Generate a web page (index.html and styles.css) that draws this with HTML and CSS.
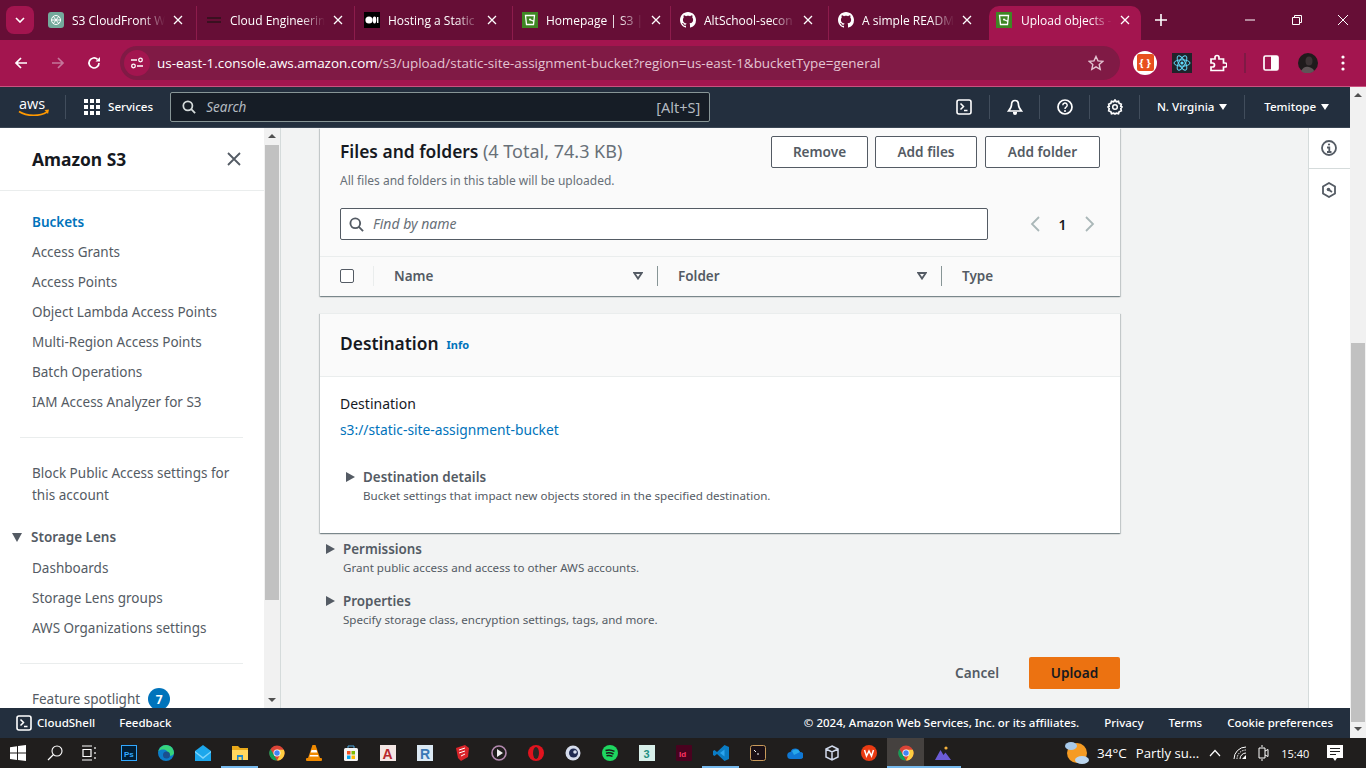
FILE: index.html
```html
<!DOCTYPE html>
<html lang="en">
<head>
    <meta charset="UTF-8">
    <meta name="viewport" content="width=device-width, initial-scale=1.0">
    <title>Upload objects - S3 bucket</title>
    <link rel="stylesheet" href="styles.css">
</head>
<body>
    <svg class="sprite" aria-hidden="true">
        <symbol id="i-github" viewBox="0 0 16 16"><path fill="#fff" d="M8 0C3.58 0 0 3.58 0 8c0 3.54 2.29 6.53 5.47 7.59.4.07.55-.17.55-.38 0-.19-.01-.82-.01-1.49-2.01.37-2.53-.49-2.69-.94-.09-.23-.48-.94-.82-1.13-.28-.15-.68-.52-.01-.53.63-.01 1.08.58 1.23.82.72 1.21 1.87.87 2.33.66.07-.52.28-.87.51-1.07-1.78-.2-3.64-.89-3.64-3.95 0-.87.31-1.59.82-2.15-.08-.2-.36-1.02.08-2.12 0 0 .67-.21 2.2.82.64-.18 1.32-.27 2-.27.68 0 1.36.09 2 .27 1.53-1.04 2.2-.82 2.2-.82.44 1.1.16 1.92.08 2.12.51.56.82 1.27.82 2.15 0 3.07-1.87 3.75-3.65 3.95.29.25.54.73.54 1.48 0 1.07-.01 1.93-.01 2.2 0 .21.15.46.55.38A8.013 8.013 0 0016 8c0-4.42-3.58-8-8-8z"/></symbol>
        <symbol id="i-s3" viewBox="0 0 16 16"><rect width="16" height="16" fill="#3f8624"/><path fill="none" stroke="#fff" stroke-width="1.3" d="M3.5 3.5h9l-1 9h-7zM8 7.5l4 2"/><circle cx="8" cy="7.5" r="1" fill="#fff"/></symbol>
        <symbol id="i-close" viewBox="0 0 10 10"><path fill="none" stroke="#fff" stroke-width="1.3" d="M1 1l8 8M9 1l-8 8"/></symbol>
        <symbol id="i-shell" viewBox="0 0 16 16"><rect x="1" y="1" width="14" height="14" rx="2" fill="none" stroke="#fff" stroke-width="1.6"/><path fill="none" stroke="#fff" stroke-width="1.5" d="M4.5 4.5l3 3-3 3M8 11.5h3.5"/></symbol>
        <symbol id="i-triangle" viewBox="0 0 10 10"><path fill="#545b64" d="M0 0l9 5-9 5z"/></symbol>
        <symbol id="i-search" viewBox="0 0 16 16"><circle cx="6.7" cy="6.7" r="5.2" fill="none" stroke="currentColor" stroke-width="2"/><path stroke="currentColor" stroke-width="2" d="M10.5 10.5l4.5 4.5"/></symbol>
        <symbol id="i-filter" viewBox="0 0 10 8"><path fill="none" stroke="#545b64" stroke-width="1.8" d="M1.2 1h7.6L5 6.6z"/></symbol>
        <symbol id="i-chrome" viewBox="0 0 20 20"><circle cx="10" cy="10" r="9.5" fill="#db4437"/><path fill="#0f9d58" d="M10 19.5A9.5 9.5 0 011.8 5l4.7 8 3.5 6.5z"/><path fill="#ffcd40" d="M10 6h8.6A9.5 9.5 0 0110 19.5L14 12z"/><circle cx="10" cy="10" r="4.4" fill="#fff"/><circle cx="10" cy="10" r="3.4" fill="#4285f4"/></symbol>
    </svg>

    <div class="tabstrip">
        <button class="tab-menu"><svg width="10" height="6" viewBox="0 0 10 6"><path fill="none" stroke="#fff" stroke-width="1.6" d="M1 1l4 4 4-4"/></svg></button>
        <div class="tab">
            <svg class="favicon" viewBox="0 0 16 16"><rect width="16" height="16" rx="3" fill="#74aa9c"/><g fill="none" stroke="#fff" stroke-width="1"><circle cx="8" cy="8" r="4.5"/><path d="M5 4l6 8M11 4l-6 8M3.5 8h9"/></g></svg>
            <span class="tab-title">S3 CloudFront W</span>
            <svg class="tab-close"><use href="#i-close"/></svg>
        </div>
        <div class="tab">
            <svg class="favicon" viewBox="0 0 16 16"><path fill="#3a1020" d="M1 5h14v2H1zM1 9h14v2H1z"/></svg>
            <span class="tab-title">Cloud Engineerin</span>
            <svg class="tab-close"><use href="#i-close"/></svg>
        </div>
        <div class="tab">
            <svg class="favicon" viewBox="0 0 16 16"><rect width="16" height="16" fill="#000"/><circle cx="5" cy="8" r="3.6" fill="#fff"/><ellipse cx="10.5" cy="8" rx="1.8" ry="3.4" fill="#fff"/><rect x="13" y="5" width="1.4" height="6" fill="#fff"/></svg>
            <span class="tab-title">Hosting a Static</span>
            <svg class="tab-close"><use href="#i-close"/></svg>
        </div>
        <div class="tab">
            <svg class="favicon"><use href="#i-s3"/></svg>
            <span class="tab-title">Homepage | S3 |</span>
            <svg class="tab-close"><use href="#i-close"/></svg>
        </div>
        <div class="tab">
            <svg class="favicon"><use href="#i-github"/></svg>
            <span class="tab-title">AltSchool-secon</span>
            <svg class="tab-close"><use href="#i-close"/></svg>
        </div>
        <div class="tab tab-last">
            <svg class="favicon"><use href="#i-github"/></svg>
            <span class="tab-title">A simple READM</span>
            <svg class="tab-close"><use href="#i-close"/></svg>
        </div>
        <div class="tab tab-active">
            <svg class="favicon"><use href="#i-s3"/></svg>
            <span class="tab-title">Upload objects -</span>
            <svg class="tab-close"><use href="#i-close"/></svg>
        </div>
        <svg class="new-tab" viewBox="0 0 12 12"><path stroke="#fff" stroke-width="1.6" d="M6 0v12M0 6h12"/></svg>
        <div class="window-controls">
            <svg viewBox="0 0 12 12"><path stroke="#fff" d="M1 6h10"/></svg>
            <svg viewBox="0 0 12 12"><path fill="none" stroke="#fff" d="M1.5 3.5h7v7h-7zM3.5 3.5v-2h7v7h-2"/></svg>
            <svg viewBox="0 0 12 12"><path stroke="#fff" d="M1 1l10 10M11 1L1 11"/></svg>
        </div>
    </div>

    <div class="toolbar">
        <svg class="tool-icon tool-back" viewBox="0 0 14 14"><path fill="none" stroke="#fff" stroke-width="1.7" d="M13 7H2M7 2L2 7l5 5"/></svg>
        <svg class="tool-icon tool-forward" viewBox="0 0 14 14"><path fill="none" stroke="#c5769a" stroke-width="1.7" d="M1 7h11M7 2l5 5-5 5"/></svg>
        <svg class="tool-icon tool-reload" viewBox="0 0 14 14"><path fill="none" stroke="#fff" stroke-width="1.7" d="M12 7a5 5 0 11-1.5-3.6"/><path fill="#fff" d="M13 1v4.500H8.500z"/></svg>
        <div class="omnibox">
            <span class="site-info"><svg width="14" height="14" viewBox="0 0 14 14"><g fill="none" stroke="#fff" stroke-width="1.300"><path d="M1 4h6M7 10h6"/><circle cx="10.500" cy="4" r="1.800"/><circle cx="3.500" cy="10" r="1.800"/></g></svg></span>
            <span class="url"><span class="url-host">us-east-1.console.aws.amazon.com</span>/s3/upload/static-site-assignment-bucket?region=us-east-1&amp;bucketType=general</span>
            <svg class="star" viewBox="0 0 16 16"><path fill="none" stroke="#e3c4d2" stroke-width="1.400" d="M8 1.500l2 4.400 4.700.5-3.500 3.200 1 4.700L8 11.900l-4.200 2.400 1-4.700L1.300 6.400 6 5.900z"/></svg>
        </div>
        <div class="extensions">
            <span class="ext-json"><span class="ext-json-inner">{ }</span></span>
            <svg class="ext-react" viewBox="0 0 20 20"><rect width="20" height="20" fill="#20232a"/><g fill="none" stroke="#61dafb"><ellipse cx="10" cy="10" rx="8" ry="3.200"/><ellipse cx="10" cy="10" rx="8" ry="3.200" transform="rotate(60 10 10)"/><ellipse cx="10" cy="10" rx="8" ry="3.200" transform="rotate(120 10 10)"/></g><circle cx="10" cy="10" r="1.600" fill="#61dafb"/></svg>
            <svg class="ext-puzzle" viewBox="0 0 18 18"><path fill="none" stroke="#fff" stroke-width="1.700" d="M2 5h4V3.500a2 2 0 014 0V5h4.500v4H16a2 2 0 010 4h-1.500v3.500H2V13h1.500a2 2 0 000-4H2z"/></svg>
            <span class="tool-sep"></span>
            <svg class="ext-panel" viewBox="0 0 16 16"><rect x="1" y="1" width="14" height="14" rx="1.500" fill="none" stroke="#fff" stroke-width="1.700"/><rect x="8" y="1" width="7" height="14" fill="#fff"/></svg>
            <svg class="ext-avatar" viewBox="0 0 20 20"><circle cx="10" cy="10" r="10" fill="#1f1b1c"/><ellipse cx="11" cy="8" rx="3.500" ry="4.500" fill="#3c3335"/><path fill="#5e5557" d="M3 18c2-4 5-5 8-4s5 2 5 4a10 10 0 01-13 0z"/></svg>
            <svg class="ext-dots" viewBox="0 0 4 16"><g fill="#fff"><circle cx="2" cy="2" r="1.600"/><circle cx="2" cy="8" r="1.600"/><circle cx="2" cy="14" r="1.600"/></g></svg>
        </div>
    </div>

    <div class="viewport">
        <div class="page">
            <header class="aws-nav">
                <svg class="aws-logo" viewBox="0 0 32 20">
                    <text class="aws-logo-text" x="1" y="12">aws</text>
                    <path fill="none" stroke="#ff9900" stroke-width="1.600" d="M1 14.500c8 5 21 5 28 .5"/>
                    <path fill="#ff9900" d="M26.500 13l4.500-.5-1 4.500z"/>
                </svg>
                <span class="nav-sep nav-sep-logo"></span>
                <svg class="services-grid" viewBox="0 0 16 16"><g fill="#fff"><rect width="4" height="4"/><rect x="6" width="4" height="4"/><rect x="12" width="4" height="4"/><rect y="6" width="4" height="4"/><rect x="6" y="6" width="4" height="4"/><rect x="12" y="6" width="4" height="4"/><rect y="12" width="4" height="4"/><rect x="6" y="12" width="4" height="4"/><rect x="12" y="12" width="4" height="4"/></g></svg>
                <span class="nav-label nav-services">Services</span>
                <div class="nav-search">
                    <svg class="nav-search-icon"><use href="#i-search"/></svg>
                    <span class="nav-search-text">Search</span>
                    <span class="nav-search-key">[Alt+S]</span>
                </div>
                <div class="nav-right">
                    <span class="nav-cell"><svg class="nav-icon"><use href="#i-shell"/></svg></span>
                    <span class="nav-cell"><svg class="nav-icon" viewBox="0 0 16 16"><path fill="none" stroke="#fff" stroke-width="1.700" d="M8 1.500c-2.500 0-3.500 2-3.500 4.500 0 2-1 3.500-3 6h13c-2-2.500-3-4-3-6 0-2.500-1-4.500-3.500-4.500z"/><path fill="#fff" d="M6 13h4v1a2 2 0 01-4 0z"/></svg></span>
                    <span class="nav-cell"><svg class="nav-icon" viewBox="0 0 16 16"><circle cx="8" cy="8" r="7" fill="none" stroke="#fff" stroke-width="1.700"/><path fill="none" stroke="#fff" stroke-width="1.500" d="M5.800 6.200a2.200 2.200 0 113.300 1.900C8.300 8.600 8 9 8 10"/><circle cx="8" cy="12" r="1" fill="#fff"/></svg></span>
                    <span class="nav-cell"><svg class="nav-icon" viewBox="0 0 16 16"><circle cx="8" cy="8" r="2.300" fill="none" stroke="#fff" stroke-width="1.500"/><path fill="none" stroke="#fff" stroke-width="1.700" d="M8 1l1.300 1.800 2.200-.5.700 2.100 2.100.8-.5 2.200L15 8l-1.200 1.600.5 2.200-2.100.8-.7 2.100-2.200-.5L8 15l-1.300-.8-2.200.5-.7-2.100-2.100-.8.5-2.200L1 8l1.200-.6-.5-2.200 2.100-.8.7-2.100 2.200.5z"/></svg></span>
                    <span class="nav-cell nav-menu nav-region"><span class="nav-label">N. Virginia</span><span class="caret"></span></span>
                    <span class="nav-cell nav-menu nav-user"><span class="nav-label">Temitope</span><span class="caret"></span></span>
                </div>
            </header>

            <div class="console">
                <aside class="sidebar">
                    <div class="side-scroll">
                        <div class="side-head">
                            <h2 class="side-title">Amazon S3</h2>
                            <svg class="side-close" viewBox="0 0 14 14"><path fill="none" stroke="#545b64" stroke-width="1.800" d="M1 1l12 12M13 1L1 13"/></svg>
                        </div>
                        <ul class="side-list side-first">
                            <li><a class="side-active">Buckets</a></li>
                            <li><a>Access Grants</a></li>
                            <li><a>Access Points</a></li>
                            <li><a>Object Lambda Access Points</a></li>
                            <li><a>Multi-Region Access Points</a></li>
                            <li><a>Batch Operations</a></li>
                            <li><a>IAM Access Analyzer for S3</a></li>
                        </ul>
                        <hr class="side-divider">
                        <p class="side-block">Block Public Access settings for this account</p>
                        <div class="side-group"><span class="side-down"></span>Storage Lens</div>
                        <ul class="side-list">
                            <li><a>Dashboards</a></li>
                            <li><a>Storage Lens groups</a></li>
                            <li><a>AWS Organizations settings</a></li>
                        </ul>
                        <hr class="side-divider side-divider-2">
                        <div class="side-spot">Feature spotlight <span class="badge">7</span></div>
                    </div>
                    <div class="scrollbar side-bar">
                        <span class="arrow-up"></span>
                        <span class="thumb side-thumb"></span>
                        <span class="arrow-down"></span>
                    </div>
                </aside>

                <main class="content">
                    <section class="card files-card">
                        <div class="files-head">
                            <div>
                                <h2 class="card-title">Files and folders <span class="counter">(4 Total, 74.3 KB)</span></h2>
                                <p class="card-sub">All files and folders in this table will be uploaded.</p>
                            </div>
                            <div class="files-actions">
                                <button class="btn btn-remove">Remove</button>
                                <button class="btn btn-files">Add files</button>
                                <button class="btn btn-folder">Add folder</button>
                            </div>
                        </div>
                        <div class="filter-row">
                            <div class="find">
                                <svg class="find-icon"><use href="#i-search"/></svg>
                                <span class="find-text">Find by name</span>
                            </div>
                            <div class="pager">
                                <svg viewBox="0 0 10 16"><path fill="none" stroke="#aab7b8" stroke-width="1.800" d="M9 1L2 8l7 7"/></svg>
                                <span class="pager-num">1</span>
                                <svg viewBox="0 0 10 16"><path fill="none" stroke="#aab7b8" stroke-width="1.800" d="M1 1l7 7-7 7"/></svg>
                            </div>
                        </div>
                        <div class="table-head">
                            <div class="th th-check"><span class="checkbox"></span></div>
                            <div class="th th-line-light">Name<svg class="sort"><use href="#i-filter"/></svg></div>
                            <div class="th th-line">Folder<svg class="sort"><use href="#i-filter"/></svg></div>
                            <div class="th th-line">Type</div>
                        </div>
                    </section>

                    <section class="card dest-card">
                        <div class="dest-head">
                            <h2 class="card-title">Destination</h2>
                            <a class="info-link">Info</a>
                        </div>
                        <div class="dest-body">
                            <div class="dest-label">Destination</div>
                            <a class="dest-link">s3://static-site-assignment-bucket</a>
                            <div class="expander dest-details">
                                <svg class="expander-arrow"><use href="#i-triangle"/></svg>
                                <div>
                                    <div class="expander-title">Destination details</div>
                                    <div class="expander-sub">Bucket settings that impact new objects stored in the specified destination.</div>
                                </div>
                            </div>
                        </div>
                    </section>

                    <div class="expander section-exp">
                        <svg class="expander-arrow"><use href="#i-triangle"/></svg>
                        <div>
                            <div class="expander-title">Permissions</div>
                            <div class="expander-sub">Grant public access and access to other AWS accounts.</div>
                        </div>
                    </div>
                    <div class="expander section-exp section-exp-2">
                        <svg class="expander-arrow"><use href="#i-triangle"/></svg>
                        <div>
                            <div class="expander-title">Properties</div>
                            <div class="expander-sub">Specify storage class, encryption settings, tags, and more.</div>
                        </div>
                    </div>

                    <div class="form-actions">
                        <button class="btn-link">Cancel</button>
                        <button class="btn-upload">Upload</button>
                    </div>
                </main>

                <aside class="tools-rail">
                    <div class="rail-cell">
                        <svg width="16" height="16" viewBox="0 0 16 16"><circle cx="8" cy="8" r="7" fill="none" stroke="#545b64" stroke-width="1.800"/><path fill="none" stroke="#545b64" stroke-width="1.800" d="M6 7.500h2.300V12M6 12h4.500"/><circle cx="8" cy="4.500" r="1.100" fill="#545b64"/></svg>
                    </div>
                    <div class="rail-cell rail-cell-2">
                        <svg width="16" height="16" viewBox="0 0 16 16"><path fill="none" stroke="#545b64" stroke-width="1.800" d="M8 1l6 3.500v7L8 15l-6-3.500v-7z"/><circle cx="7.500" cy="7.500" r="1.800" fill="#545b64"/><path stroke="#545b64" stroke-width="1.800" d="M8 8l3 2"/></svg>
                    </div>
                </aside>
            </div>

            <footer class="aws-footer">
                <svg class="foot-shell"><use href="#i-shell"/></svg>
                <span class="foot-cloud">CloudShell</span>
                <span class="foot-feedback">Feedback</span>
                <span class="foot-copy">© 2024, Amazon Web Services, Inc. or its affiliates.</span>
                <span class="foot-link">Privacy</span>
                <span class="foot-link">Terms</span>
                <span class="foot-link">Cookie preferences</span>
            </footer>
        </div>
        <div class="scrollbar page-bar">
            <span class="arrow-up"></span>
            <span class="thumb page-thumb"></span>
            <span class="arrow-down"></span>
        </div>
    </div>

    <div class="taskbar">
        <svg class="tb-start" viewBox="0 0 16 16"><path fill="#fff" d="M0 2.200L7 1.200v6.400H0zM8 1l8-1v7.600H8zM0 8.500h7v6.400l-7-1zM8 8.500h8V16l-8-1.100z"/></svg>
        <svg class="tb-search" viewBox="0 0 16 16"><circle cx="10" cy="6" r="5" fill="none" stroke="#fff" stroke-width="1.100"/><path stroke="#fff" stroke-width="1.300" d="M6.500 9.500L1 15"/></svg>
        <svg class="tb-view" viewBox="0 0 16 16"><path fill="none" stroke="#fff" stroke-width="1.200" d="M1 1h10M1 15h10M2 4.500h8v7H2zM14 2v2M14 7v2M14 12v2"/></svg>
        <div class="tb-apps">
            <span class="tb-app"><svg viewBox="0 0 16 16"><rect x=".5" y=".5" width="15" height="15" fill="#001e36" stroke="#31a8ff"/><text class="tb-letter tb-ps" x="3" y="11.500">Ps</text></svg></span>
            <span class="tb-app"><svg viewBox="0 0 16 16"><circle cx="8" cy="8" r="8" fill="#0c7dc9"/><path fill="#37d57c" d="M16 8c0-4.400-3.600-8-8-8C4 0 1 3 .5 6.500 2 4.500 5 4 7.500 5c2.500 1 2.500 4 1 5.500 3 1 7.500 0 7.500-2.500z"/><circle cx="8.500" cy="10" r="3.500" fill="#1a4f8f"/></svg></span>
            <span class="tb-app"><svg viewBox="0 0 16 16"><path fill="#1ca7ec" d="M0 6l8-6 8 6v10H0z"/><path fill="#7fd4fa" d="M0 6l8 6 8-6v1.500L8 14 0 7.500z"/></svg></span>
            <span class="tb-app tb-open"><svg viewBox="0 0 16 16"><path fill="#e8a91a" d="M0 1h6l2 2h8v12H0z"/><path fill="#ffd75e" d="M0 5h16v10H0z"/><path fill="#1e88c9" d="M5 10h6v5h-1.500v-3h-3v3H5z"/></svg></span>
            <span class="tb-app"><svg><use href="#i-chrome"/></svg></span>
            <span class="tb-app"><svg viewBox="0 0 16 16"><path fill="#f08a00" d="M6.500 0h3L14 13H2z"/><path fill="#fff" d="M5.500 5h5l.8 2.500H4.700zM4 10h8l.5 1.500h-9z"/><rect y="13" width="16" height="3" rx="1" fill="#f08a00"/></svg></span>
            <span class="tb-app"><svg viewBox="0 0 16 16"><rect x="1" y="3" width="14" height="13" rx="1.500" fill="#f4f4f4"/><path fill="none" stroke="#4fa8e0" d="M5 3V1h6v2"/><rect x="4" y="6" width="3.500" height="3.500" fill="#f25022"/><rect x="8.500" y="6" width="3.500" height="3.500" fill="#7fba00"/><rect x="4" y="10.500" width="3.500" height="3.500" fill="#00a4ef"/><rect x="8.500" y="10.500" width="3.500" height="3.500" fill="#ffb900"/></svg></span>
            <span class="tb-app"><svg viewBox="0 0 16 16"><rect width="16" height="16" fill="#f3e6e4"/><text class="tb-letter tb-cad" x="2.500" y="14">A</text></svg></span>
            <span class="tb-app"><svg viewBox="0 0 16 16"><rect width="16" height="16" fill="#dbe9f4"/><text class="tb-letter tb-rev" x="3" y="14">R</text></svg></span>
            <span class="tb-app"><svg viewBox="0 0 16 16"><path fill="#d9252a" d="M2 3l9-3 4 3-1 9-7 4-3-3z"/><path fill="none" stroke="#fff" d="M5 5l6-2M5 8l6-2M7 11l4-2"/></svg></span>
            <span class="tb-app"><svg viewBox="0 0 16 16"><circle cx="8" cy="8" r="7" fill="none" stroke="#b48ab0" stroke-width="1.600"/><path fill="#f0f0f0" d="M6 4l6 4-6 4z"/></svg></span>
            <span class="tb-app"><svg viewBox="0 0 16 16"><circle cx="8" cy="8" r="8" fill="#e0131e"/><ellipse cx="8" cy="8" rx="3" ry="6" fill="#2a2725"/></svg></span>
            <span class="tb-app"><svg viewBox="0 0 16 16"><circle cx="8" cy="8" r="7.500" fill="#d5dcec"/><circle cx="8.500" cy="8" r="4.500" fill="#1f2a52"/><circle cx="10" cy="7" r="1.800" fill="#d5dcec"/></svg></span>
            <span class="tb-app"><svg viewBox="0 0 16 16"><circle cx="8" cy="8" r="8" fill="#1ed760"/><path fill="none" stroke="#1a1a1a" stroke-width="1.500" d="M3.500 5.500c3-1 6-.8 9 .8M4 8.200c2.500-.8 5-.5 7.500.8M4.500 10.800c2-.6 4-.4 6 .6"/></svg></span>
            <span class="tb-app"><svg viewBox="0 0 16 16"><rect width="16" height="16" fill="#d8efea"/><text class="tb-letter tb-3ds" x="4.500" y="13">3</text></svg></span>
            <span class="tb-app"><svg viewBox="0 0 16 16"><rect width="16" height="16" rx="1" fill="#49021f"/><text class="tb-letter tb-id" x="3" y="11.500">Id</text></svg></span>
            <span class="tb-app tb-open"><svg viewBox="0 0 16 16"><path fill="#0a7cc4" d="M11.500 0L16 2v12l-4.500 2L4 9l-2.500 2L0 10V6l1.500-1L4 7z"/><path fill="#2ba5ee" d="M11.500 4.500L7 8l4.500 3.500z"/></svg></span>
            <span class="tb-app"><svg viewBox="0 0 16 16"><rect x=".5" y=".5" width="15" height="15" rx="2" fill="#1a1016" stroke="#c99a5b"/><path stroke="#fff" d="M4 5l2 2M7 9h2"/></svg></span>
            <span class="tb-app"><svg viewBox="0 0 16 16"><path fill="#0f78d4" d="M4 14a3.500 3.500 0 01-.5-7A5 5 0 0113 7a3.500 3.500 0 010 7z"/><path fill="#28a8ea" d="M5 6a5 5 0 018 1l-6 3z"/></svg></span>
            <span class="tb-app"><svg viewBox="0 0 16 16"><path fill="none" stroke="#cfd8ea" stroke-width="1.500" d="M8 1l6 3v8l-6 3-6-3V4zM2 4l6 3 6-3M8 7v8"/></svg></span>
            <span class="tb-app"><svg viewBox="0 0 16 16"><circle cx="8" cy="8" r="8" fill="#ea3b13"/><path fill="none" stroke="#fff" stroke-width="1.500" d="M3.500 5l2 6 2.500-5 2.500 5 2-6"/></svg></span>
            <span class="tb-app tb-open tb-current"><svg><use href="#i-chrome"/></svg></span>
            <span class="tb-app tb-open"><svg viewBox="0 0 16 16"><path fill="#6b5bd6" d="M0 15L5.500 5l3 5 2-2.500L16 15z"/><circle cx="11" cy="3" r="1.600" fill="#f5b23d"/></svg></span>
        </div>
        <div class="tray">
            <svg class="tray-weather" viewBox="0 0 26 26"><circle cx="13" cy="13" r="10" fill="#f59b23"/><ellipse cx="7" cy="6" rx="6" ry="4" fill="#a7c9ea"/><ellipse cx="18" cy="20" rx="7" ry="4" fill="#bcd6ee"/></svg>
            <span class="tray-temp">34°C</span>
            <span class="tray-cond">Partly su...</span>
            <svg class="tray-up" viewBox="0 0 12 8"><path fill="none" stroke="#fff" stroke-width="1.200" d="M1 7l5-5.500L11 7"/></svg>
            <svg class="tray-wifi" viewBox="0 0 14 14"><g fill="none" stroke="#fff"><path d="M1 13A12 12 0 0113 1"/><path d="M4 13a9 9 0 019-9" stroke-dasharray="1.500 1"/><path d="M7 13a6 6 0 016-6"/></g><path fill="#fff" d="M13 9v4H9z"/></svg>
            <svg class="tray-cam" viewBox="0 0 14 16"><path fill="none" stroke="#fff" d="M3 3h6v10H3zM9 6l3-1.500v7L9 10M5 1h2M5 15h2"/></svg>
            <span class="tray-time">15:40</span>
            <svg class="tray-note" viewBox="0 0 16 16"><path fill="#fff" d="M0 0h16v13H10l-2 3-2-3H0z"/><path stroke="#222" d="M3 3.500h10M3 6.500h10M3 9.500h6"/></svg>
        </div>
    </div>
</body>
</html>
```

FILE: styles.css
```css
* {
    margin: 0;
    padding: 0;
    box-sizing: border-box;
}

html, body {
    height: 100%;
    overflow: hidden;
}

body {
    display: flex;
    flex-direction: column;
    width: 1366px;
    height: 768px;
    font-family: "Noto Sans", "Open Sans", sans-serif;
    font-size: 14px;
    color: #16191f;
    background: #f2f3f3;
}

ul {
    list-style: none;
}

button {
    font-family: inherit;
    background: none;
    border: none;
}

.sprite {
    display: none;
}

/* browser tabs */
.tabstrip {
    display: flex;
    align-items: flex-end;
    height: 40px;
    flex-shrink: 0;
    background: #660e36;
    color: #fff;
    font-family: "Open Sans", sans-serif;
    font-size: 12px;
}

.tab-menu {
    display: flex;
    align-items: center;
    justify-content: center;
    width: 28px;
    height: 28px;
    margin: 0 5px 6px 6px;
    border-radius: 8px;
    background: #a3154f;
}

.tab {
    display: flex;
    align-items: center;
    width: 158px;
    height: 34px;
    padding: 0 15px 6px 9px;
    border-right: 1px solid #8d1c4c;
}

.tab-last {
    border-right: none;
}

.tab-active {
    width: 152px;
    margin-left: 2px;
    padding: 0 11px 6px 7px;
    background: #a3154f;
    border-right: none;
    border-radius: 10px 10px 0 0;
}

.favicon {
    width: 16px;
    height: 16px;
    flex-shrink: 0;
    margin-right: 8px;
}

.tab-active .favicon {
    margin-right: 9px;
}

.tab-title {
    flex: 1;
    white-space: nowrap;
    -webkit-mask-image: linear-gradient(90deg, #000 75%, transparent);
    mask-image: linear-gradient(90deg, #000 75%, transparent);
}

.tab-close {
    width: 10px;
    height: 10px;
    flex-shrink: 0;
    margin-left: 8px;
}

.new-tab {
    width: 12px;
    height: 12px;
    margin: 0 0 14px 14px;
}

.window-controls {
    display: flex;
    margin: 0 0 14px auto;
    padding-right: 17px;
    gap: 34.5px;
}

.window-controls svg {
    width: 12px;
    height: 12px;
}

/* browser toolbar */
.toolbar {
    display: flex;
    align-items: center;
    height: 47px;
    flex-shrink: 0;
    padding-bottom: 1px;
    background: #a3154f;
    border-bottom: 1px solid #c9527f;
}

.tool-icon {
    width: 14px;
    height: 14px;
}

.tool-back {
    margin-left: 14px;
}

.tool-forward {
    margin-left: 23px;
}

.tool-reload {
    margin-left: 22px;
}

.omnibox {
    display: flex;
    align-items: center;
    width: 1000px;
    height: 34px;
    margin-left: 19px;
    padding: 0 16px 0 4px;
    border-radius: 17px;
    background: #801a45;
}

.site-info {
    display: flex;
    align-items: center;
    justify-content: center;
    width: 26px;
    height: 26px;
    border-radius: 50%;
    background: #a3154f;
}

.url {
    flex: 1;
    margin-left: 7px;
    font-family: "Open Sans", sans-serif;
    font-size: 13.45px;
    color: #e3c4d2;
    white-space: nowrap;
}

.url-host {
    color: #fff;
}

.star {
    width: 16px;
    height: 16px;
}

.extensions {
    display: flex;
    align-items: center;
    flex: 1;
}

.ext-json {
    display: flex;
    align-items: center;
    justify-content: center;
    width: 24px;
    height: 24px;
    margin-left: 13px;
    border-radius: 50%;
    background: #fff;
}

.ext-json-inner {
    display: flex;
    align-items: center;
    justify-content: center;
    width: 17px;
    height: 17px;
    border-radius: 2px;
    background: #e8501f;
    color: #fff;
    font-size: 11px;
    font-weight: 700;
}

.ext-react {
    width: 20px;
    height: 20px;
    margin-left: 15px;
}

.ext-puzzle {
    width: 18px;
    height: 18px;
    margin-left: 17px;
}

.tool-sep {
    width: 2px;
    height: 20px;
    margin-left: 17px;
    background: #7f1a45;
}

.ext-panel {
    width: 16px;
    height: 16px;
    margin-left: 17px;
}

.ext-avatar {
    width: 20px;
    height: 20px;
    margin-left: 19px;
}

.ext-dots {
    width: 4px;
    height: 16px;
    margin-left: 23px;
}

/* page area */
.viewport {
    display: flex;
    flex: 1;
    min-height: 0;
}

.page {
    display: flex;
    flex-direction: column;
    width: 1350px;
}

.aws-nav {
    display: flex;
    align-items: center;
    height: 41px;
    flex-shrink: 0;
    background: #232f3e;
    border-bottom: 1px solid #3a4654;
    color: #fff;
}

.aws-logo {
    width: 32px;
    height: 20px;
    margin-left: 18px;
}

.aws-logo-text {
    font-family: "Open Sans", sans-serif;
    font-size: 14.5px;
    fill: #fff;
}

.nav-sep {
    width: 1px;
    height: 24px;
    background: #414d5c;
}

.nav-sep-logo {
    margin-left: 15px;
}

.services-grid {
    width: 16px;
    height: 16px;
    margin-left: 18px;
}

.nav-label {
    padding-bottom: 2px;
    font-size: 11.6px;
    font-weight: 500;
    white-space: nowrap;
}

.nav-services {
    margin-left: 8px;
}

.nav-search {
    display: flex;
    align-items: center;
    width: 540px;
    height: 30px;
    margin-left: 17px;
    padding: 0 9px 0 11px;
    background: #161d26;
    border: 1px solid #879596;
    border-radius: 2px;
    color: #b3bac0;
    font-size: 13.5px;
}

.nav-search-icon {
    width: 14px;
    height: 14px;
    color: #d5dbdb;
}

.nav-search-text {
    margin-left: 10px;
    font-style: italic;
    flex: 1;
}

.nav-search-key {
    font-size: 14.5px;
}

.nav-right {
    display: flex;
    align-items: center;
    margin-left: 229px;
}

.nav-cell {
    display: flex;
    align-items: center;
    justify-content: center;
    width: 50px;
    height: 24px;
    border-left: 1px solid #414d5c;
}

.nav-cell:first-child {
    border-left: none;
}

.nav-icon {
    width: 16px;
    height: 16px;
}

.nav-menu {
    gap: 5px;
}

.nav-region {
    width: 105px;
}

.nav-user {
    width: 104px;
}

.caret {
    width: 0;
    height: 0;
    border-left: 4.5px solid transparent;
    border-right: 4.5px solid transparent;
    border-top: 6px solid #fff;
}

/* console body */
.console {
    display: flex;
    flex: 1;
    min-height: 0;
}

.sidebar {
    display: flex;
    width: 281px;
    flex-shrink: 0;
    background: #fff;
    border-right: 1px solid #d5dbdb;
}

.side-scroll {
    width: 264px;
    overflow: hidden;
    color: #545b64;
    font-size: 13.5px;
}

.side-head {
    display: flex;
    align-items: center;
    justify-content: space-between;
    height: 63px;
    padding: 0 23px 1px 32px;
    border-bottom: 1px solid #eaeded;
}

.side-title {
    font-size: 17.4px;
    font-weight: 700;
    color: #16191f;
}

.side-close {
    width: 14px;
    height: 14px;
}

.side-first {
    margin-top: 16px;
}

.side-list li {
    height: 30px;
    padding-left: 32px;
    line-height: 30px;
    white-space: nowrap;
}

.side-active {
    color: #0073bb;
    font-weight: 600;
}

.side-divider {
    margin: 20px 21px 0 20px;
    border: none;
    border-top: 1px solid #eaeded;
}

.side-divider-2 {
    margin-top: 20px;
}

.side-block {
    margin-top: 24px;
    padding: 0 20px 0 32px;
    line-height: 22px;
}

.side-group {
    display: flex;
    align-items: center;
    margin: 16px 0 1px 12px;
    height: 30px;
    font-weight: 600;
}

.side-down {
    width: 0;
    height: 0;
    margin-right: 9px;
    border-left: 5.5px solid transparent;
    border-right: 5.5px solid transparent;
    border-top: 9px solid #545b64;
}

.side-spot {
    display: flex;
    align-items: center;
    gap: 8px;
    margin-top: 24px;
    padding-left: 32px;
    white-space: nowrap;
}

.badge {
    display: flex;
    align-items: center;
    justify-content: center;
    width: 22px;
    height: 22px;
    border-radius: 50%;
    background: #0073bb;
    color: #fff;
    font-size: 12px;
    font-weight: 700;
}

.scrollbar {
    display: flex;
    flex-direction: column;
    align-items: center;
    background: #f1f1f1;
}

.side-bar {
    width: 16px;
}

.page-bar {
    width: 16px;
    border-bottom: 1px solid #f1f1f1;
}

.arrow-up,
.arrow-down {
    width: 0;
    height: 0;
    flex-shrink: 0;
    border-left: 4px solid transparent;
    border-right: 4px solid transparent;
}

.arrow-up {
    margin-top: 6px;
    border-bottom: 4px solid #505050;
}

.arrow-down {
    margin-top: auto;
    margin-bottom: 6px;
    border-top: 4px solid #505050;
}

.thumb {
    width: 14px;
    flex-shrink: 0;
    background: #c1c1c1;
}

.side-thumb {
    height: 455px;
    margin-top: 7px;
}

.page-thumb {
    height: 379px;
    margin-top: 246px;
}

/* main column */
.content {
    flex: 1;
    padding: 0 188px 0 39px;
    overflow: hidden;
    background: #f2f3f3;
}

.card {
    background: #fff;
    box-shadow: 0 1px 1px 0 rgba(0, 28, 36, 0.3), 1px 1px 1px 0 rgba(0, 28, 36, 0.15), -1px 1px 1px 0 rgba(0, 28, 36, 0.15);
}

.files-card {
    height: 168px;
    background: #fafafa;
}

.files-head {
    display: flex;
    justify-content: space-between;
    padding: 8px 20px 0;
}

.card-title {
    font-size: 17.4px;
    font-weight: 600;
    line-height: 30px;
}

.counter {
    font-size: 18px;
    font-weight: 400;
    color: #687078;
}

.card-sub {
    margin-top: 6px;
    font-size: 12px;
    line-height: 18px;
    color: #687078;
}

.files-actions {
    display: flex;
}

.btn {
    height: 32px;
    padding-bottom: 2px;
    background: #fff;
    border: 1px solid #545b64;
    border-radius: 2px;
    color: #545b64;
    font-size: 13.6px;
    font-weight: 600;
}

.btn-remove {
    width: 97px;
}

.btn-files {
    width: 102px;
    margin-left: 7px;
}

.btn-folder {
    width: 115px;
    margin-left: 8px;
}

.filter-row {
    display: flex;
    align-items: center;
    margin-top: 18px;
    padding: 0 20px;
}

.find {
    display: flex;
    align-items: center;
    width: 648px;
    height: 32px;
    padding-left: 8px;
    background: #fff;
    border: 1px solid #545b64;
    border-radius: 2px;
    color: #545b64;
}

.find-icon {
    width: 15px;
    height: 15px;
}

.find-text {
    margin-left: 9px;
    padding-bottom: 2px;
    font-style: italic;
    color: #687078;
}

.pager {
    display: flex;
    align-items: center;
    margin-left: 42px;
}

.pager svg {
    width: 10px;
    height: 16px;
}

.pager-num {
    width: 45px;
    text-align: center;
    font-weight: 600;
}

.table-head {
    display: grid;
    grid-template-columns: 53px 284px 284px 1fr;
    align-items: center;
    height: 40px;
    margin-top: 16px;
    padding-bottom: 2px;
    background: #fafafa;
    border-top: 1px solid #eaeded;
    color: #545b64;
    font-size: 13.5px;
    font-weight: 600;
}

.th {
    display: flex;
    align-items: center;
    justify-content: space-between;
    height: 20px;
    padding: 0 14px 0 20px;
}

.th-check {
    padding-left: 20px;
}

.th-line {
    border-left: 1px solid #879596;
}

.th-line-light {
    border-left: 1px solid #eaeded;
}

.checkbox {
    width: 14px;
    height: 14px;
    background: #fff;
    border: 1px solid #545b64;
    border-radius: 2px;
}

.sort {
    width: 10px;
    height: 8px;
}

/* destination */
.dest-card {
    height: 220px;
    margin-top: 17px;
}

.dest-head {
    display: flex;
    align-items: center;
    gap: 8px;
    height: 64px;
    padding: 0 20px 4px;
    background: #fafafa;
    border-top: 1px solid #eaeded;
    border-bottom: 1px solid #eaeded;
}

.info-link {
    margin-top: 3px;
    color: #0073bb;
    font-size: 11px;
    font-weight: 700;
}

.dest-body {
    padding: 17px 20px 0;
}

.dest-label {
    line-height: 20px;
}

.dest-link {
    display: block;
    margin-top: 6px;
    font-size: 13.8px;
    line-height: 20px;
    color: #0073bb;
}

.expander {
    display: flex;
}

.expander-arrow {
    width: 10px;
    height: 10px;
    margin-top: 5px;
    margin-right: 7px;
    flex-shrink: 0;
}

.expander-title {
    font-size: 13.4px;
    font-weight: 600;
    line-height: 20px;
    color: #545b64;
}

.expander-sub {
    margin-top: 1px;
    font-size: 11.6px;
    line-height: 16px;
    color: #545b64;
}

.dest-details {
    margin: 27px 0 0 6px;
}

.section-exp {
    margin: 6px 0 0 6px;
}

.section-exp-2 {
    margin-top: 15px;
}

.form-actions {
    display: flex;
    align-items: center;
    justify-content: flex-end;
    margin-top: 29px;
}

.btn-link {
    padding-bottom: 2px;
    color: #545b64;
    font-size: 13.6px;
    font-weight: 600;
}

.btn-upload {
    width: 91px;
    height: 32px;
    margin-left: 30px;
    padding-bottom: 2px;
    background: #ec7211;
    border-radius: 2px;
    color: #16191f;
    font-size: 13.6px;
    font-weight: 600;
}

.tools-rail {
    width: 42px;
    flex-shrink: 0;
    background: #fff;
    border-left: 1px solid #d5dbdb;
}

.rail-cell {
    display: flex;
    justify-content: center;
    align-items: center;
    height: 41px;
    padding-right: 2px;
    border-bottom: 1px solid #d5dbdb;
}

.rail-cell-2 {
    border-bottom: none;
}

/* console footer */
.aws-footer {
    display: flex;
    align-items: center;
    height: 30px;
    flex-shrink: 0;
    padding: 0 17px 0 16px;
    background: #232f3e;
    color: #fff;
    font-size: 11.5px;
    font-weight: 500;
    white-space: nowrap;
}

.aws-footer span {
    padding-bottom: 2px;
}

.foot-shell {
    width: 16px;
    height: 16px;
}

.foot-cloud {
    margin-left: 5px;
}

.foot-feedback {
    margin-left: 24px;
}

.foot-copy {
    margin-left: auto;
}

.foot-link {
    margin-left: 25px;
}

/* windows taskbar */
.taskbar {
    display: flex;
    align-items: center;
    height: 30px;
    flex-shrink: 0;
    background: #201e1d;
    color: #fff;
    font-family: "Open Sans", sans-serif;
}

.tb-start {
    width: 16px;
    height: 16px;
    margin-left: 10px;
}

.tb-search {
    width: 16px;
    height: 16px;
    margin-left: 21px;
}

.tb-view {
    width: 16px;
    height: 16px;
    margin-left: 18px;
}

.tb-apps {
    display: flex;
    margin-left: 13px;
}

.tb-app {
    display: flex;
    align-items: center;
    justify-content: center;
    width: 37px;
    height: 30px;
    border-bottom: 2px solid transparent;
    padding-top: 2px;
}

.tb-app svg {
    width: 16px;
    height: 16px;
}

.tb-open {
    border-bottom-color: #76b9ed;
}

.tb-current {
    background: #45413f;
}

.tb-letter {
    font-family: "Liberation Sans", sans-serif;
    font-weight: 700;
}

.tb-ps {
    font-size: 8px;
    fill: #31a8ff;
}

.tb-cad {
    font-size: 14px;
    fill: #b8282c;
}

.tb-rev {
    font-size: 14px;
    fill: #3a78b5;
}

.tb-3ds {
    font-size: 11px;
    fill: #1f8f82;
}

.tb-id {
    font-size: 8px;
    fill: #ff3366;
}

.tray {
    display: flex;
    align-items: center;
    margin-left: 103px;
}

.tray-weather {
    width: 26px;
    height: 26px;
}

.tray-temp {
    margin-left: 7px;
    font-size: 13.5px;
}

.tray-cond {
    margin-left: 9px;
    font-size: 13.2px;
    white-space: nowrap;
}

.tray-up {
    width: 12px;
    height: 8px;
    margin-left: 10px;
}

.tray-wifi {
    width: 14px;
    height: 14px;
    margin-left: 12px;
}

.tray-cam {
    width: 14px;
    height: 16px;
    margin-left: 9px;
}

.tray-time {
    margin-left: 11px;
    font-size: 11px;
}

.tray-note {
    width: 16px;
    height: 16px;
    margin-left: 18px;
}

@media (max-width: 768px) {
    .sidebar {
        display: none;
    }
}
```
